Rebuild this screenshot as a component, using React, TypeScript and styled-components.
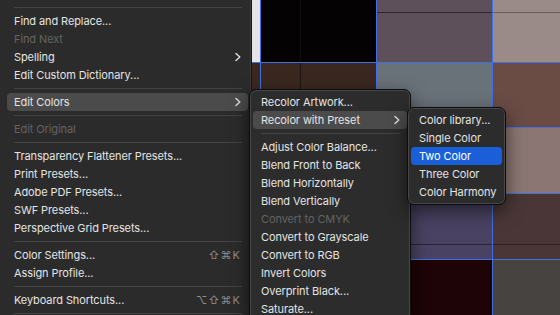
import React from 'react';
import styled, { createGlobalStyle } from 'styled-components';

const Global = createGlobalStyle`
  html, body { margin: 0; padding: 0; width: 560px; height: 315px; overflow: hidden; background: #2b2b2b; }
  #root { width: 560px; height: 315px; }
`;

const Page = styled.div`
  position: relative;
  display: flex;
  width: 560px;
  height: 315px;
  overflow: hidden;
  font-family: Inter, "Noto Sans", "DejaVu Sans", sans-serif;
  font-size: 11px;
  letter-spacing: -0.1px;
  -webkit-font-smoothing: antialiased;
`;

const MainMenu = styled.div`
  flex: 0 0 252px;
  box-sizing: border-box;
  background: #2b2b2b;
  border-right: 1px solid #151515;
  box-shadow: inset -1px 0 0 #3a3a3a;
  padding: 3px 3px 0 7px;
  display: flex;
  flex-direction: column;
`;

const Canvas = styled.div`
  flex: 1;
  display: grid;
  grid-template-columns: 8px 115px 115px 1fr;
  grid-template-rows: 62px 64px 65px 65px 1fr;
  gap: 1px;
  background: #4170e6;
`;

const Cell = styled.div<{ $bg: string; $h?: number; $v?: number; $line?: string }>`
  background: ${(p) => {
    const line = p.$line || '#2e252b';
    const layers: string[] = [];
    if (p.$h !== undefined)
      layers.push(`linear-gradient(to bottom, transparent ${p.$h}px, ${line} ${p.$h}px, ${line} ${p.$h + 1}px, transparent ${p.$h + 1}px)`);
    if (p.$v !== undefined)
      layers.push(`linear-gradient(to right, transparent ${p.$v}px, ${line} ${p.$v}px, ${line} ${p.$v + 1}px, transparent ${p.$v + 1}px)`);
    layers.push(`linear-gradient(${p.$bg}, ${p.$bg})`);
    return layers.join(', ');
  }};
`;

const Submenu = styled.div<{ $left: number; $top: number; $width: number }>`
  position: absolute;
  left: ${(p) => p.$left}px;
  top: ${(p) => p.$top}px;
  width: ${(p) => p.$width}px;
  box-sizing: border-box;
  padding: 3px;
  background: #2c2c2c;
  border: 1px solid #0c0c0c;
  border-radius: 7px;
  box-shadow: inset 0 0 0 1px #474747, 0 6px 18px rgba(0, 0, 0, 0.55);
  display: flex;
  flex-direction: column;
`;

type RowState = 'normal' | 'disabled' | 'open' | 'active';

const Row = styled.div<{ $state?: RowState; $pad?: number }>`
  flex: 0 0 18px;
  height: 18px;
  display: flex;
  align-items: center;
  box-sizing: border-box;
  padding: 0 7px 0 ${(p) => p.$pad ?? 7}px;
  border-radius: 4px;
  white-space: nowrap;
  color: ${(p) => (p.$state === 'disabled' ? '#636363' : p.$state === 'active' ? '#ffffff' : '#e4e4e4')};
  background: ${(p) => (p.$state === 'open' ? '#4b4b4b' : p.$state === 'active' ? '#1b5fd8' : 'transparent')};
`;

const Separator = styled.div<{ $l?: number; $r?: number }>`
  flex: 0 0 9px;
  height: 9px;
  display: flex;
  align-items: flex-start;
  padding: 4px ${(p) => p.$r ?? 6}px 0 ${(p) => p.$l ?? 7}px;
  box-sizing: border-box;
  &::after {
    content: '';
    flex: 1;
    height: 1px;
    background: #424242;
  }
`;

const Shortcut = styled.span`
  margin-left: auto;
  color: #8a8a8a;
  letter-spacing: 1px;
  font-family: Inter, "DejaVu Sans", sans-serif;
`;

const ChevronBox = styled.span`
  margin-left: auto;
  display: flex;
  align-items: center;
`;

const Chevron = () => (
  <ChevronBox>
    <svg width="6" height="10" viewBox="0 0 6 10">
      <polyline points="1,1.5 4.8,5 1,8.5" fill="none" stroke="#e0e0e0" strokeWidth="1.4" strokeLinecap="round" strokeLinejoin="round" />
    </svg>
  </ChevronBox>
);

type Item =
  | { sep: true }
  | { label: string; state?: RowState; sub?: boolean; key?: string };

const mainItems: Item[] = [
  { sep: true },
  { label: 'Find and Replace...' },
  { label: 'Find Next', state: 'disabled' },
  { label: 'Spelling', sub: true },
  { label: 'Edit Custom Dictionary...' },
  { sep: true },
  { label: 'Edit Colors', sub: true, state: 'open' },
  { sep: true },
  { label: 'Edit Original', state: 'disabled' },
  { sep: true },
  { label: 'Transparency Flattener Presets...' },
  { label: 'Print Presets...' },
  { label: 'Adobe PDF Presets...' },
  { label: 'SWF Presets...' },
  { label: 'Perspective Grid Presets...' },
  { sep: true },
  { label: 'Color Settings...', key: '⇧⌘K' },
  { label: 'Assign Profile...' },
  { sep: true },
  { label: 'Keyboard Shortcuts...', key: '⌥⇧⌘K' },
  { sep: true },
];

const colorItems: Item[] = [
  { label: 'Recolor Artwork...' },
  { label: 'Recolor with Preset', sub: true, state: 'open' },
  { sep: true },
  { label: 'Adjust Color Balance...' },
  { label: 'Blend Front to Back' },
  { label: 'Blend Horizontally' },
  { label: 'Blend Vertically' },
  { label: 'Convert to CMYK', state: 'disabled' },
  { label: 'Convert to Grayscale' },
  { label: 'Convert to RGB' },
  { label: 'Invert Colors' },
  { label: 'Overprint Black...' },
  { label: 'Saturate...' },
];

const presetItems: Item[] = [
  { label: 'Color library...' },
  { label: 'Single Color' },
  { label: 'Two Color', state: 'active' },
  { label: 'Three Color' },
  { label: 'Color Harmony' },
];

const renderItems = (items: Item[], pad: number, sepL: number, sepR: number) =>
  items.map((it, i) =>
    'sep' in it ? (
      <Separator key={i} $l={sepL} $r={sepR} />
    ) : (
      <Row key={i} $state={it.state} $pad={pad}>
        <span>{it.label}</span>
        {it.sub && <Chevron />}
        {it.key && <Shortcut>{it.key}</Shortcut>}
      </Row>
    )
  );

const cells: { bg: string; h?: number; v?: number; line?: string }[] = [
  { bg: '#e4e4e4' }, { bg: '#050203', v: 39, line: '#140d0e' }, { bg: '#5e505a', h: 12 }, { bg: '#9a8a88', h: 12, line: '#6a5d5d' },
  { bg: '#3a2820' }, { bg: '#3a2820', v: 39, line: '#1c1410' }, { bg: '#6a7279' }, { bg: '#6a4c45' },
  { bg: '#3a2820' }, { bg: '#3a2820' }, { bg: '#6b5a6a' }, { bg: '#8b7673' },
  { bg: '#3a2820' }, { bg: '#3a2820' }, { bg: '#4a4262', h: 50, line: '#2a2433' }, { bg: '#4a3636', h: 50, line: '#2c2020' },
  { bg: '#3a2820' }, { bg: '#3a2820' }, { bg: '#1e0406' }, { bg: '#474340' },
];

export default function App() {
  return (
    <Page>
      <Global />
      <MainMenu>{renderItems(mainItems, 7, 7, 6)}</MainMenu>
      <Canvas>
        {cells.map((c, i) => (
          <Cell key={i} $bg={c.bg} $h={c.h} $v={c.v} $line={c.line} />
        ))}
      </Canvas>
      <Submenu $left={249} $top={89} $width={162}>
        {renderItems(colorItems, 8, 8, 7)}
      </Submenu>
      <Submenu $left={407} $top={107} $width={99}>
        {renderItems(presetItems, 8, 8, 7)}
      </Submenu>
    </Page>
  );
}
